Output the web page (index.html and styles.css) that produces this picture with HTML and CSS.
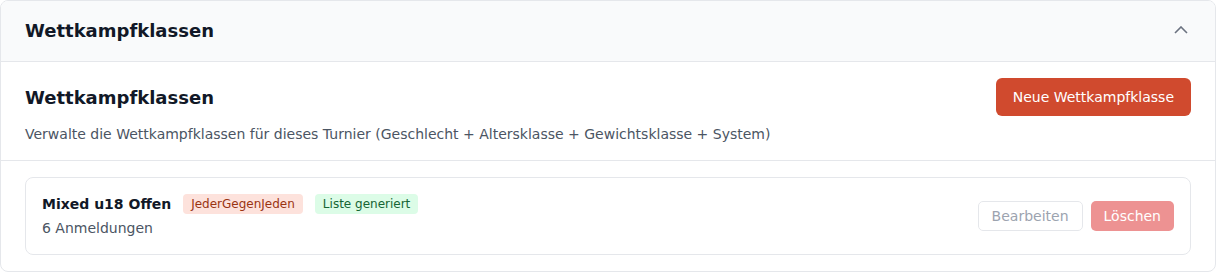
FILE: index.html
```html
<!DOCTYPE html>
<html lang="de">

<head>
    <meta charset="UTF-8">
    <meta name="viewport" content="width=device-width, initial-scale=1.0">
    <title>Wettkampfklassen</title>
    <link rel="stylesheet" href="styles.css">
</head>

<body>
    <div class="panel">
        <div class="panel-header">
            <h2>Wettkampfklassen</h2>
            <svg class="chevron" width="14" height="8" viewBox="0 0 14 8">
                <path d="M1 7 L7 1 L13 7" fill="none" stroke="#6b7280" stroke-width="1.6" />
            </svg>
        </div>

        <div class="panel-intro">
            <div class="intro-row">
                <h3>Wettkampfklassen</h3>
                <button class="btn-primary">Neue Wettkampfklasse</button>
            </div>
            <p class="intro-text">Verwalte die Wettkampfklassen für dieses Turnier (Geschlecht + Altersklasse + Gewichtsklasse + System)</p>
        </div>

        <div class="class-list">
            <div class="class-card">
                <div class="class-info">
                    <div class="class-title">
                        <span class="class-name">Mixed u18 Offen</span>
                        <span class="badge badge-system">JederGegenJeden</span>
                        <span class="badge badge-status">Liste generiert</span>
                    </div>
                    <div class="class-count">6 Anmeldungen</div>
                </div>
                <div class="class-actions">
                    <button class="btn-outline" disabled>Bearbeiten</button>
                    <button class="btn-danger" disabled>Löschen</button>
                </div>
            </div>
        </div>
    </div>
</body>
</html>
```

FILE: styles.css
```css
body {
    font-family: "DejaVu Sans", Verdana, sans-serif;
    margin: 0;
    padding: 0;
    background-color: #ffffff;
    color: #111827;
}

.panel {
    width: 1216px;
    box-sizing: border-box;
    border: 1px solid #e5e7eb;
    border-radius: 8px;
    overflow: hidden;
    background-color: white;
}

.panel-header {
    display: flex;
    justify-content: space-between;
    align-items: center;
    box-sizing: border-box;
    height: 61px;
    padding: 0 24px 1px;
    background-color: #f9fafb;
    border-bottom: 1px solid #e5e7eb;
}

.panel-header h2 {
    margin: 0;
    font-size: 18px;
    font-weight: bold;
    color: #111827;
}

.chevron {
    margin-right: 3px;
    margin-top: -2px;
}

.panel-intro {
    padding: 16px 24px;
    border-bottom: 1px solid #e5e7eb;
}

.intro-row {
    display: flex;
    justify-content: space-between;
    align-items: center;
}

.intro-row h3 {
    margin: 0;
    font-size: 18px;
    font-weight: bold;
    color: #111827;
}

.btn-primary {
    height: 38px;
    padding: 0 17px;
    background-color: #d04a2e;
    color: white;
    border: none;
    border-radius: 6px;
    font-family: inherit;
    font-size: 14px;
    cursor: pointer;
}

.intro-text {
    margin: 8px 0 0;
    font-size: 14px;
    line-height: 20px;
    color: #4b5563;
}

.class-list {
    padding: 16px 24px;
}

.class-card {
    display: flex;
    justify-content: space-between;
    align-items: center;
    padding: 16px;
    border: 1px solid #e5e7eb;
    border-radius: 8px;
}

.class-title {
    display: flex;
    align-items: center;
    gap: 12px;
    height: 20px;
}

.class-name {
    font-size: 14px;
    font-weight: bold;
    color: #111827;
}

.badge {
    font-size: 12px;
    line-height: 20px;
    padding: 0 8px;
    border-radius: 4px;
}

.badge-system {
    background-color: #fde2dc;
    color: #9a3412;
}

.badge-status {
    background-color: #dcfce7;
    color: #166534;
}

.class-count {
    margin-top: 4px;
    font-size: 14px;
    line-height: 20px;
    color: #4b5563;
}

.class-actions {
    display: flex;
    gap: 8px;
}

.btn-outline,
.btn-danger {
    height: 30px;
    padding: 0 13px;
    border-radius: 5px;
    font-family: inherit;
    font-size: 14px;
}

.btn-outline {
    background-color: white;
    color: #9ca3af;
    border: 1px solid #e5e7eb;
}

.btn-danger {
    background-color: #ed9292;
    color: white;
    border: none;
}
```
